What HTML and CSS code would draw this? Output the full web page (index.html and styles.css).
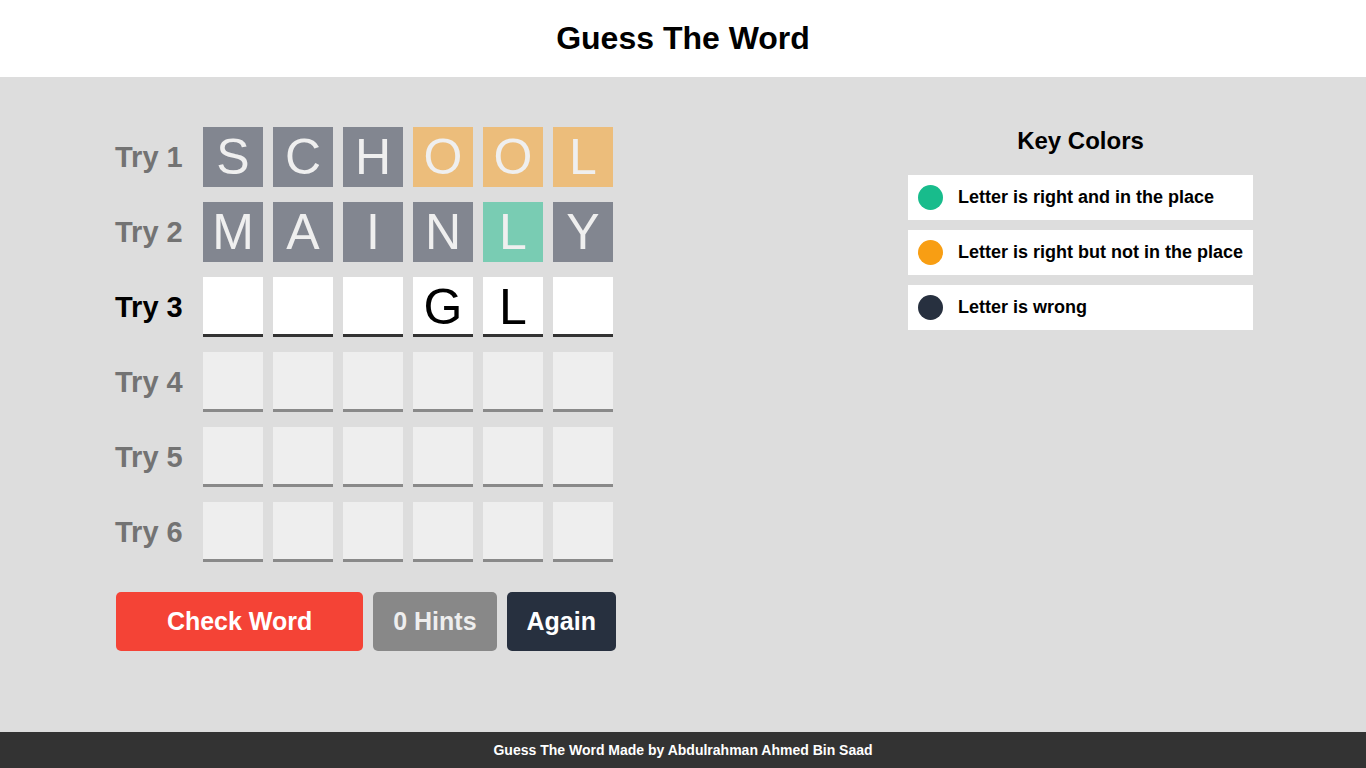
FILE: index.html
```html
<!DOCTYPE html>
<html lang="en">
<head>
<meta charset="UTF-8">
<title>Guess The Word</title>
<link rel="stylesheet" href="styles.css">
</head>
<body>
<header class="header"><h1>Guess The Word</h1></header>
<main class="main">
  <div class="container">
    <div class="game">
      <div class="inputs">
        <div class="row done">
          <span class="label">Try 1</span>
          <div class="tile no">S</div><div class="tile no">C</div><div class="tile no">H</div><div class="tile notin">O</div><div class="tile notin">O</div><div class="tile notin">L</div>
        </div>
        <div class="row done">
          <span class="label">Try 2</span>
          <div class="tile no">M</div><div class="tile no">A</div><div class="tile no">I</div><div class="tile no">N</div><div class="tile inplace">L</div><div class="tile no">Y</div>
        </div>
        <div class="row active">
          <span class="label">Try 3</span>
          <div class="tile"></div><div class="tile"></div><div class="tile"></div><div class="tile">G</div><div class="tile">L</div><div class="tile"></div>
        </div>
        <div class="row disabled">
          <span class="label">Try 4</span>
          <div class="tile"></div><div class="tile"></div><div class="tile"></div><div class="tile"></div><div class="tile"></div><div class="tile"></div>
        </div>
        <div class="row disabled">
          <span class="label">Try 5</span>
          <div class="tile"></div><div class="tile"></div><div class="tile"></div><div class="tile"></div><div class="tile"></div><div class="tile"></div>
        </div>
        <div class="row disabled">
          <span class="label">Try 6</span>
          <div class="tile"></div><div class="tile"></div><div class="tile"></div><div class="tile"></div><div class="tile"></div><div class="tile"></div>
        </div>
      </div>
      <div class="controls">
        <button class="btn check">Check Word</button>
        <button class="btn hint">0 Hints</button>
        <button class="btn again">Again</button>
      </div>
    </div>
    <div class="key-colors">
      <h2>Key Colors</h2>
      <div class="key"><span class="dot green"></span><span class="key-text">Letter is right and in the place</span></div>
      <div class="key"><span class="dot orange"></span><span class="key-text">Letter is right but not in the place</span></div>
      <div class="key"><span class="dot dark"></span><span class="key-text">Letter is wrong</span></div>
    </div>
  </div>
</main>
<footer class="footer">Guess The Word Made by Abdulrahman Ahmed Bin Saad</footer>
</body>
</html>
```
FILE: styles.css
```css
* { box-sizing: border-box; }
html, body { margin: 0; padding: 0; }
body {
  font-family: "Liberation Sans", Arial, sans-serif;
  background: #dddddd;
  height: 100vh;
  display: flex;
  flex-direction: column;
}
.header {
  background: #ffffff;
  height: 77px;
  display: flex;
  align-items: center;
  justify-content: center;
}
.header h1 {
  margin: 0;
  font-size: 32px;
  font-weight: bold;
  color: #000;
}
.main {
  flex: 1;
  padding-top: 50px;
}
.container {
  width: 1140px;
  margin: 0 auto;
  display: flex;
  justify-content: space-between;
  align-items: flex-start;
}
.game { width: 503px; padding-left: 2px; }
.row {
  display: flex;
  align-items: center;
  gap: 10px;
  margin-bottom: 15px;
}
.label {
  width: 78px;
  font-size: 29px;
  font-weight: bold;
  color: #737373;
}
.row.active .label { color: #000; }
.tile {
  width: 60px;
  height: 60px;
  display: flex;
  align-items: center;
  justify-content: center;
  font-size: 50px;
  color: #000;
  text-transform: uppercase;
}
.row.done .tile { color: #efefef; }
.tile.no { background: #828690; }
.tile.notin { background: #ecbd7b; }
.tile.inplace { background: #79ccb3; }
.row.active .tile {
  background: #ffffff;
  border-bottom: 3px solid #333333;
  padding-top: 3px;
}
.row.disabled .tile {
  background: #eeeeee;
  border-bottom: 3px solid #898989;
}
.controls {
  display: flex;
  gap: 10px;
  margin-top: 30px;
  padding-left: 1px;
}
.btn {
  height: 59px;
  border: none;
  border-radius: 5px;
  padding: 0 20px;
  font-family: "Liberation Sans", Arial, sans-serif;
  font-size: 25px;
  font-weight: bold;
  color: #ffffff;
}
.btn.check { flex: 1; background: #f44336; }
.btn.hint { background: #888888; color: #eeeeee; }
.btn.again { background: #27303f; }
.key-colors { width: 345px; }
.key-colors h2 {
  margin: 0 0 20px;
  text-align: center;
  font-size: 24px;
  font-weight: bold;
  color: #000;
}
.key {
  background: #ffffff;
  height: 45px;
  display: flex;
  align-items: center;
  padding: 0 10px;
  margin-bottom: 10px;
}
.dot {
  width: 25px;
  height: 25px;
  border-radius: 50%;
  margin-right: 15px;
  flex-shrink: 0;
}
.dot.green { background: #18bc8c; }
.dot.orange { background: #f89e13; }
.dot.dark { background: #27303f; }
.key-text {
  font-size: 18px;
  font-weight: bold;
  color: #000;
}
.footer {
  background: #333333;
  color: #ffffff;
  height: 36px;
  display: flex;
  align-items: center;
  justify-content: center;
  font-size: 14px;
  font-weight: bold;
}
```
